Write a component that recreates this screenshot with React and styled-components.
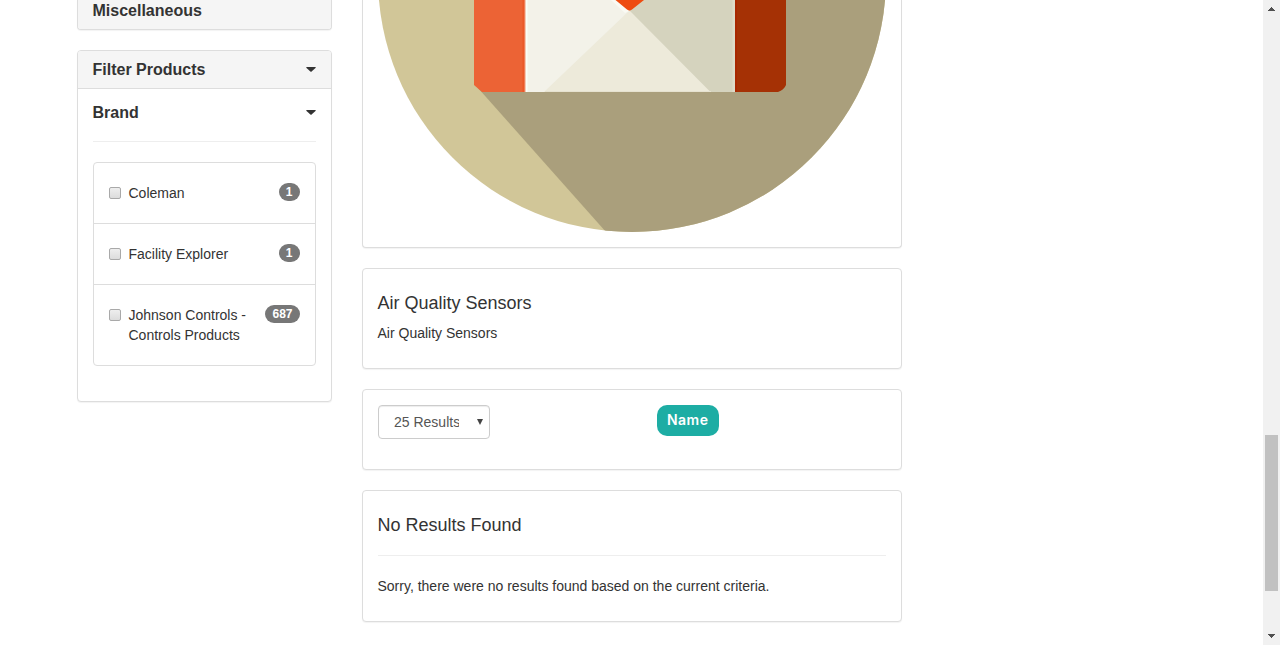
import React from "react";
import styled, { createGlobalStyle } from "styled-components";

const GlobalStyle = createGlobalStyle`
  *, *::before, *::after { box-sizing: border-box; }
  html, body { margin: 0; background: #fff; overflow: hidden; }
  body {
    font-family: "Liberation Sans", Arial, sans-serif;
    font-size: 14px;
    line-height: 20px;
    color: #333;
  }
`;

const Page = styled.div`
  display: flex;
  justify-content: space-between;
  height: 645px;
  overflow: hidden;
`;

const Container = styled.div`
  display: flex;
  align-items: flex-start;
  gap: 30px;
  padding-left: 76.5px;
`;

const Column = styled.div`
  display: flex;
  flex-direction: column;
  gap: 20px;
  width: ${(p) => p.$width}px;
`;

const Panel = styled.section`
  border: 1px solid #ddd;
  border-radius: 4px;
  background: #fff;
  box-shadow: 0 1px 1px rgba(0, 0, 0, 0.05);
  ${(p) => p.$openTop && "border-top: 0; border-top-left-radius: 0; border-top-right-radius: 0;"}
`;

const PanelHeading = styled.header`
  display: flex;
  align-items: center;
  justify-content: space-between;
  height: 38px;
  padding: 0 15px;
  background: #f5f5f5;
  border-bottom: 1px solid #ddd;
  border-radius: 3px 3px 0 0;
`;

const CategoryHeading = styled(PanelHeading)`
  height: 29px;
  padding-bottom: 8px;
  border-bottom: 0;
  border-radius: 0 0 3px 3px;
`;

const PanelTitle = styled.h3`
  margin: 0;
  font-size: 16px;
  line-height: 18px;
  font-weight: bold;
`;

const PanelBody = styled.div`
  padding: 15px;
`;

const FilterBody = styled(PanelBody)`
  padding-bottom: 35px;
`;

const FilterGroup = styled.div`
  display: flex;
  align-items: center;
  justify-content: space-between;
  height: 17px;
`;

const Rule = styled.hr`
  height: 1px;
  margin: 20px 0;
  border: 0;
  background: #eee;
`;

const OptionList = styled.ul`
  margin: 0;
  padding: 0;
  list-style: none;
  border: 1px solid #ddd;
  border-radius: 4px;
`;

const Option = styled.li`
  display: flex;
  align-items: flex-start;
  padding: 20px 15px;
  & + & { border-top: 1px solid #ddd; }
`;

const Checkbox = styled.input`
  appearance: none;
  flex: none;
  width: 12px;
  height: 12px;
  margin: 4px 8px 0 0;
  border: 1px solid #a9a9a9;
  border-radius: 2px;
  background: linear-gradient(#eee, #dcdcdc);
`;

const OptionLabel = styled.label`
  flex: none;
  width: 125px;
`;

const Badge = styled.span`
  margin-left: auto;
  padding: 3px 7px;
  border-radius: 10px;
  background: #777;
  color: #fff;
  font-size: 12px;
  font-weight: bold;
  line-height: 12px;
`;

const ImageBody = styled(PanelBody)`
  padding-top: 0;
  svg { display: block; width: 508px; height: 232px; }
`;

const Title = styled.h4`
  margin: 10px 0 ${(p) => (p.$spaced ? "10px" : "0")};
  font-size: 18px;
  font-weight: normal;
  line-height: 19px;
`;

const Text = styled.p`
  margin: 0 0 10px;
`;

const Toolbar = styled(PanelBody)`
  display: flex;
  align-items: flex-start;
  padding-bottom: 30px;
`;

const Select = styled.button`
  display: flex;
  align-items: center;
  justify-content: space-between;
  width: 112px;
  height: 34px;
  margin-right: 167px;
  padding: 0 6px 0 15.5px;
  border: 1px solid #ccc;
  border-radius: 4px;
  background: #fff;
  box-shadow: inset 0 1px 1px rgba(0, 0, 0, 0.075);
  color: #555;
  font: 14px/20px "Liberation Sans", Arial, sans-serif;
`;

const SelectValue = styled.span`
  width: 65px;
  overflow: hidden;
  white-space: nowrap;
  text-align: left;
`;

const SortButton = styled.button`
  width: 62px;
  height: 31px;
  padding: 0 0 1px;
  border: 0;
  border-radius: 10px;
  background: #1dada4;
  color: #fff;
  font: 600 14px/30px Inter, "Open Sans", sans-serif;
  letter-spacing: 0.45px;
  text-indent: 0.45px;
`;

const Scrollbar = styled.div`
  display: flex;
  flex-direction: column;
  align-items: center;
  width: 17px;
  padding: 7px 0;
  background: #f1f1f1;
`;

const Thumb = styled.div`
  width: 13px;
  height: 156px;
  margin: 424px 0 43px;
  background: #c1c1c1;
`;

const Caret = () => (
  <svg width="10" height="5" viewBox="0 0 10 5">
    <path d="M.6 0H9.4Q10 .4 9.5 .9L5.6 4.6Q5 5.1 4.4 4.6L.5 .9Q0 .4 .6 0Z" fill="#333" />
  </svg>
);

const ScrollArrow = ({ down }) => (
  <svg width="7" height="4" viewBox="0 0 7 4" shapeRendering="crispEdges">
    <path
      d={down ? "M0 0h7v1h-1v1h-1v1h-1v1h-1v-1h-1v-1h-1v-1h-1z" : "M3 0h1v1h1v1h1v1h1v1h-7v-1h1v-1h1v-1h1z"}
      fill="#505050"
    />
  </svg>
);

const MailIllustration = () => (
  <svg viewBox="378 0 508 232">
    <defs>
      <clipPath id="disc">
        <circle cx="632" cy="-22" r="254" />
      </clipPath>
      <linearGradient id="fold">
        <stop offset="0" stopColor="#eb5827" />
        <stop offset=".5" stopColor="#fafff8" />
        <stop offset="1" stopColor="#f3f2e9" />
      </linearGradient>
    </defs>
    <g clipPath="url(#disc)">
      <path d="M378 0H886V232H378Z" fill="#d1c698" />
      <path d="M478 0H886V232H606L478 88Z" fill="#aa9f7c" />
    </g>
    <path d="M474 0H525V92H482L474 85Z" fill="#ec6335" />
    <path d="M522.5 0H525V92H522.5Z" fill="#eb5827" />
    <path d="M525 0H630V92H525Z" fill="#f3f2e9" />
    <path d="M629 0H735V92H629Z" fill="#d5d3be" />
    <path d="M629.5 10.5L710.5 92H544Z" fill="#edeada" />
    <path d="M545 91H711V92H545Z" fill="#e6e2d0" />
    <path d="M524 0H528.5V92H524Z" fill="url(#fold)" />
    <path d="M732.5 0H735V92H732.5Z" fill="#dedbc9" />
    <path d="M611 0H616L629 11L625 13Z" fill="#fafaf3" />
    <path d="M615.5 0H644L632 9.5Q629.5 11.5 627 9.5Z" fill="#ee4b10" />
    <path d="M735 0H786V85Q784 90 778 92H735Z" fill="#a53105" />
    <path d="M735 0H737V92H735Z" fill="#a82700" />
  </svg>
);

const brands = [
  { name: "Coleman", count: 1 },
  { name: "Facility Explorer", count: 1 },
  { name: "Johnson Controls - Controls Products", count: 687 },
];

export default function App() {
  return (
    <>
      <GlobalStyle />
      <Page>
        <Container>
          <Column $width={255}>
            <Panel $openTop>
              <CategoryHeading>
                <PanelTitle>Miscellaneous</PanelTitle>
              </CategoryHeading>
            </Panel>
            <Panel>
              <PanelHeading>
                <PanelTitle>Filter Products</PanelTitle>
                <Caret />
              </PanelHeading>
              <FilterBody>
                <FilterGroup>
                  <PanelTitle>Brand</PanelTitle>
                  <Caret />
                </FilterGroup>
                <Rule />
                <OptionList>
                  {brands.map((b, i) => (
                    <Option key={b.name}>
                      <Checkbox type="checkbox" id={`brand-${i}`} />
                      <OptionLabel htmlFor={`brand-${i}`}>{b.name}</OptionLabel>
                      <Badge>{b.count}</Badge>
                    </Option>
                  ))}
                </OptionList>
              </FilterBody>
            </Panel>
          </Column>
          <Column $width={540}>
            <Panel $openTop>
              <ImageBody>
                <MailIllustration />
              </ImageBody>
            </Panel>
            <Panel>
              <PanelBody>
                <Title $spaced>Air Quality Sensors</Title>
                <Text>Air Quality Sensors</Text>
              </PanelBody>
            </Panel>
            <Panel>
              <Toolbar>
                <Select>
                  <SelectValue>25 Results</SelectValue>
                  <svg width="6" height="6" viewBox="0 0 6 6">
                    <path d="M0 0H6L3 6Z" fill="#444" />
                  </svg>
                </Select>
                <SortButton>Name</SortButton>
              </Toolbar>
            </Panel>
            <Panel>
              <PanelBody>
                <Title>No Results Found</Title>
                <Rule />
                <Text>Sorry, there were no results found based on the current criteria.</Text>
              </PanelBody>
            </Panel>
          </Column>
        </Container>
        <Scrollbar>
          <ScrollArrow />
          <Thumb />
          <ScrollArrow down />
        </Scrollbar>
      </Page>
    </>
  );
}
